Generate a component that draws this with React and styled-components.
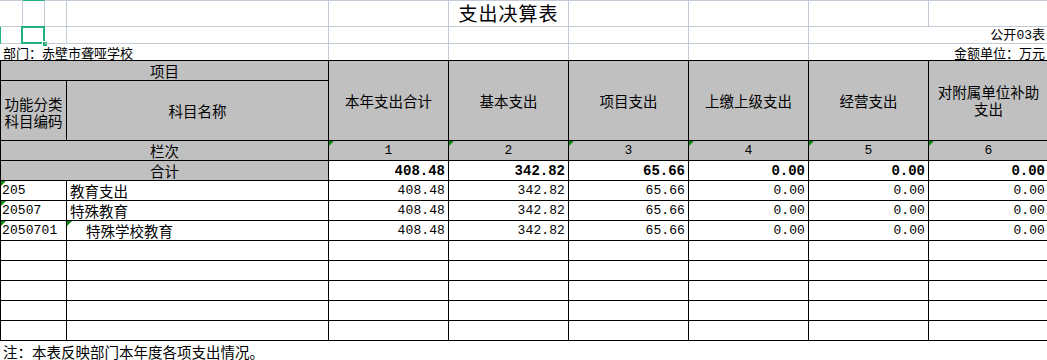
import React from "react";
import styled, { createGlobalStyle } from "styled-components";

const GRID = "#c3cad8";
const GREEN = "#1fb27a";
const GRAY = "#c0c0c0";
const CJK = `"Noto Sans CJK SC", "Noto Sans", sans-serif`;
const MONO = `"Liberation Mono", "Noto Sans CJK SC", monospace`;

const GlobalStyle = createGlobalStyle`
  html, body {
    margin: 0;
    padding: 0;
    background: #fff;
  }
  body {
    font-family: ${CJK};
    color: #000;
  }
  * {
    box-sizing: border-box;
  }
`;

// Styled Components
const Sheet = styled.div`
  width: 1047px;
  height: 360px;
  overflow: hidden;
  background: #fff;
`;

const TopGrid = styled.div`
  display: grid;
  grid-template-columns: 23px 22px 22px 262px repeat(6, 120px);
  grid-template-rows: 27px 17px 16px;
  width: 1049px;
`;

const GridCell = styled.div`
  position: relative;
  display: flex;
  align-items: ${(p) => (p.$valign === "end" ? "flex-end" : "center")};
  justify-content: ${(p) =>
    p.$align === "right" ? "flex-end" : p.$align === "center" ? "center" : "flex-start"};
  grid-column: ${(p) => (p.$span ? `span ${p.$span}` : "auto")};
  border-right: 1px solid ${(p) => (p.$noRight ? "transparent" : GRID)};
  border-top: ${(p) => (p.$top ? `1px solid ${p.$topColor || GRID}` : "none")};
  border-bottom: ${(p) => (p.$bottom ? `1px solid ${GRID}` : "none")};
  border-left: ${(p) => (p.$leftMark ? `1px solid ${GREEN}` : "none")};
  font-size: 13px;
  line-height: 14px;
  padding: 0 3px 0 3px;
  white-space: nowrap;
`;

const Title = styled.span`
  font-size: 19px;
  line-height: 20px;
  letter-spacing: 1px;
  margin-top: -2px;
`;

const SmallText = styled.span`
  font-family: ${MONO};
  font-size: 13px;
`;

const Selection = styled.div`
  position: absolute;
  left: -2px;
  top: -1px;
  width: 24px;
  height: 18px;
  border: 2px solid ${GREEN};
  pointer-events: none;
`;

const Handle = styled.div`
  position: absolute;
  right: -5px;
  bottom: -5px;
  width: 6px;
  height: 6px;
  background: ${GREEN};
  border: 1px solid #fff;
`;

const TableGrid = styled.div`
  display: grid;
  grid-template-columns: 66px 262px repeat(6, 120px);
  grid-template-rows: 20px 60px repeat(10, 20px);
  border-top: 1px solid #000;
  border-left: 1px solid #000;
  width: 1049px;
`;

const Cell = styled.div`
  position: relative;
  display: flex;
  align-items: center;
  justify-content: ${(p) =>
    p.$align === "right" ? "flex-end" : p.$align === "left" ? "flex-start" : "center"};
  grid-column: ${(p) => (p.$span ? `span ${p.$span}` : "auto")};
  grid-row: ${(p) => (p.$rows ? `span ${p.$rows}` : "auto")};
  border-right: 1px solid #000;
  border-bottom: 1px solid #000;
  background: ${(p) => (p.$gray ? GRAY : "#fff")};
  font-size: 14.5px;
  line-height: 16px;
  padding: 0 3px 0 ${(p) => (p.$indent ? "19px" : p.$first ? "1px" : "3px")};
  text-align: center;
  white-space: nowrap;

  &::before {
    content: "";
    display: ${(p) => (p.$mark ? "block" : "none")};
    position: absolute;
    left: 0;
    top: 0;
    width: 0;
    height: 0;
    border-top: 5px solid #0e8a0e;
    border-right: 5px solid transparent;
  }
`;

const TwoLines = styled.span`
  display: flex;
  flex-direction: column;
  align-items: center;
  gap: 1px;
  line-height: 16px;
`;

const Num = styled.span`
  font-family: ${MONO};
  font-size: ${(p) => (p.$bold ? "14px" : "13px")};
  font-weight: ${(p) => (p.$bold ? 700 : 400)};
  letter-spacing: ${(p) => (p.$bold ? "0px" : "0.1px")};
  margin-top: 1px;
`;

const Note = styled.div`
  height: 20px;
  display: flex;
  align-items: center;
  padding-left: 3px;
  font-size: 14.5px;
`;

const heads = [
  "本年支出合计",
  "基本支出",
  "项目支出",
  "上缴上级支出",
  "经营支出",
  ["对附属单位补助", "支出"],
];

const total = ["408.48", "342.82", "65.66", "0.00", "0.00", "0.00"];

const rows = [
  { code: "205", name: "教育支出", vals: total },
  { code: "20507", name: "特殊教育", vals: total },
  { code: "2050701", name: "特殊学校教育", vals: total, sub: true },
];

export default function App() {
  return (
    <>
      <GlobalStyle />
      <Sheet>
        <TopGrid>
          {/* row 1 */}
          <GridCell $top $bottom />
          <GridCell $top $topColor={GREEN} $bottom />
          <GridCell $top $bottom />
          <GridCell $top $bottom />
          <GridCell $top $bottom />
          <GridCell $top $bottom $align="center">
            <Title>支出决算表</Title>
          </GridCell>
          <GridCell $top $bottom />
          <GridCell $top $bottom />
          <GridCell $top $bottom />
          <GridCell $top $bottom />

          {/* row 2 */}
          <GridCell $bottom $leftMark />
          <GridCell $bottom>
            <Selection>
              <Handle />
            </Selection>
          </GridCell>
          <GridCell $bottom />
          <GridCell $bottom />
          <GridCell $bottom />
          <GridCell $bottom />
          <GridCell $bottom />
          <GridCell $bottom />
          <GridCell $bottom $span={2} $align="right" $valign="end">
            <span>
              公开<SmallText>03</SmallText>表
            </span>
          </GridCell>

          {/* row 3 */}
          <GridCell $span={4} $valign="end">
            部门：赤壁市聋哑学校
          </GridCell>
          <GridCell />
          <GridCell />
          <GridCell />
          <GridCell />
          <GridCell $span={2} $align="right" $valign="end">
            金额单位：万元
          </GridCell>
        </TopGrid>

        <TableGrid>
          <Cell $gray $span={2}>项目</Cell>
          {heads.map((h, i) => (
            <Cell $gray $rows={2} key={i}>
              {Array.isArray(h) ? (
                <TwoLines>
                  <span>{h[0]}</span>
                  <span>{h[1]}</span>
                </TwoLines>
              ) : (
                h
              )}
            </Cell>
          ))}
          <Cell $gray>
            <TwoLines style={{ marginTop: 3 }}>
              <span>功能分类</span>
              <span>科目编码</span>
            </TwoLines>
          </Cell>
          <Cell $gray>科目名称</Cell>

          <Cell $gray $span={2}>栏次</Cell>
          {[1, 2, 3, 4, 5, 6].map((n) => (
            <Cell $gray $mark key={n}>
              <Num>{n}</Num>
            </Cell>
          ))}

          <Cell $gray $span={2}>合计</Cell>
          {total.map((v, i) => (
            <Cell $align="right" key={i}>
              <Num $bold>{v}</Num>
            </Cell>
          ))}

          {rows.map((r) => (
            <React.Fragment key={r.code}>
              <Cell $align="left" $first $mark>
                <Num>{r.code}</Num>
              </Cell>
              <Cell $align="left" $indent={r.sub} $mark={r.sub}>
                {r.name}
              </Cell>
              {r.vals.map((v, i) => (
                <Cell $align="right" key={i}>
                  <Num>{v}</Num>
                </Cell>
              ))}
            </React.Fragment>
          ))}

          {Array.from({ length: 40 }).map((_, i) => (
            <Cell key={`e${i}`} />
          ))}
        </TableGrid>

        <Note>注：本表反映部门本年度各项支出情况。</Note>
      </Sheet>
    </>
  );
}
